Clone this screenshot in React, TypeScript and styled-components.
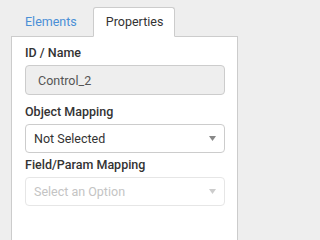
import React from "react";
import styled, { createGlobalStyle } from "styled-components";

const GlobalStyle = createGlobalStyle`
  html, body {
    margin: 0;
    padding: 0;
    background: #eeeeee;
    overflow: hidden;
  }
  body {
    font-family: Roboto, "Liberation Sans", Arial, sans-serif;
    color: #333;
  }
`;

const Wrapper = styled.div`
  width: 227px;
  padding: 7px 0 0 11px;
`;

const TabBar = styled.ul`
  display: flex;
  align-items: flex-end;
  margin: 0;
  padding: 0;
  list-style: none;
  border-bottom: 1px solid #cccccc;
`;

const Tab = styled.li<{ $active?: boolean }>`
  height: 28px;
  margin-bottom: -1px;
  margin-right: 2px;
  padding: 0 11px 0 12px;
  display: flex;
  align-items: center;
  font-size: 12.5px;
  line-height: 16px;
  border: 1px solid ${p => (p.$active ? "#cccccc" : "transparent")};
  border-bottom-color: ${p => (p.$active ? "#ffffff" : "transparent")};
  border-radius: 3px 3px 0 0;
  background: ${p => (p.$active ? "#ffffff" : "transparent")};
  color: ${p => (p.$active ? "#333333" : "#4a8fd6")};
  cursor: pointer;
  &:first-child {
    padding-left: 13px;
    padding-right: 13px;
  }
`;

const Panel = styled.div`
  background: #ffffff;
  border: 1px solid #cccccc;
  border-top: none;
  padding: 8px 12px 40px 13px;
`;

const Label = styled.div`
  font-size: 12.5px;
  line-height: 16px;
  font-weight: 500;
  color: #333333;
  margin-bottom: 4px;
`;

const TextInput = styled.div`
  box-sizing: border-box;
  height: 30px;
  margin-bottom: 9px;
  padding: 0 12px;
  display: flex;
  align-items: center;
  font-size: 12.5px;
  color: #555555;
  background: #eeeeee;
  border: 1px solid #cccccc;
  border-radius: 4px;
`;

const SelectBox = styled.div<{ $disabled?: boolean }>`
  box-sizing: border-box;
  height: 29px;
  margin-bottom: 4px;
  padding: 0 8px;
  display: flex;
  align-items: center;
  justify-content: space-between;
  font-size: 12.5px;
  color: ${p => (p.$disabled ? "#c4c4c4" : "#333333")};
  background: #ffffff;
  border: 1px solid ${p => (p.$disabled ? "#e6e6e6" : "#cccccc")};
  border-radius: 4px;
`;

const Caret = styled.svg<{ $disabled?: boolean }>`
  width: 7px;
  height: 5px;
  fill: ${p => (p.$disabled ? "#cccccc" : "#888888")};
`;

const Select = ({ value, disabled }: { value: string; disabled?: boolean }) => (
  <SelectBox $disabled={disabled}>
    <span>{value}</span>
    <Caret $disabled={disabled} viewBox="0 0 7 5">
      <polygon points="0,0 7,0 3.5,5" />
    </Caret>
  </SelectBox>
);

export default function App() {
  return (
    <>
      <GlobalStyle />
      <Wrapper>
        <TabBar>
          <Tab>Elements</Tab>
          <Tab $active>Properties</Tab>
        </TabBar>
        <Panel>
          <Label>ID / Name</Label>
          <TextInput>Control_2</TextInput>
          <Label>Object Mapping</Label>
          <Select value="Not Selected" />
          <Label>Field/Param Mapping</Label>
          <Select value="Select an Option" disabled />
        </Panel>
      </Wrapper>
    </>
  );
}
